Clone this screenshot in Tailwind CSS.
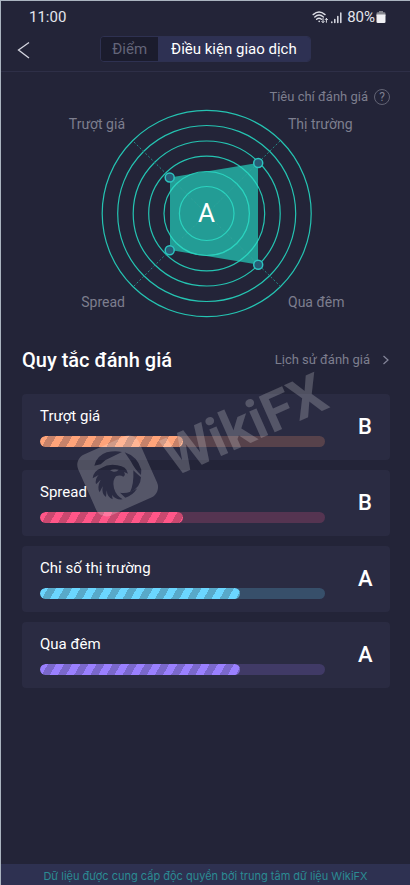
<!DOCTYPE html>
<html lang="vi">
<head>
    <meta charset="UTF-8">
    <meta name="viewport" content="width=device-width, initial-scale=1.0">
    <title>Điều kiện giao dịch</title>
    <script src="https://cdn.jsdelivr.net/npm/@tailwindcss/browser@4"></script>
</head>
<body class="bg-[#232438] font-[Roboto,sans-serif] text-white">
    <div class="relative min-h-screen flex flex-col border-t border-l border-[#aab4c0] overflow-hidden">

        <!-- Status bar -->
        <div class="h-8 flex items-center justify-between pl-7 pr-6 text-[15px] text-[#e4e5ec]">
            <span>11:00</span>
            <div class="flex items-center gap-1">
                <svg class="w-[31px] h-4" viewBox="0 0 31 16" fill="none" stroke="#dcdde5" stroke-width="1.4" stroke-linecap="round">
                    <path d="M1.2 5.6Q7 .6 13 5.6M2.8 8Q7 4.2 11.4 8M4.6 10.3Q7 8.2 9.4 10.3"/>
                    <circle cx="7.2" cy="12.4" r="0.8" fill="#dcdde5" stroke="none"/>
                    <path d="M11 9.5v4M9.8 12.4l1.2 1.2 1.2-1.2M14.4 13.3V9.5M13.2 10.6l1.2-1.2 1.2 1.2" stroke-width="1"/>
                    <path d="M19.8 13v.5M22.8 10.5v3M25.8 7.5v6M28.8 4v9.5" stroke-width="1.5"/>
                </svg>
                <div class="flex items-center gap-px">
                    <span>80%</span>
                    <svg class="w-[10px] h-[14px]" viewBox="0 0 10 14">
                        <path d="M3 1h4v1.2h1.2Q9.5 2.2 9.5 3.6V6H.5V3.6Q.5 2.2 1.8 2.2H3z" fill="#85868f"/>
                        <path d="M.5 4.5h9v7.2Q9.5 13 8.2 13H1.8Q.5 13 .5 11.7z" fill="#f0f0f4"/>
                    </svg>
                </div>
            </div>
        </div>

        <!-- Tabs -->
        <header class="relative h-[39px] flex justify-center border-b border-[#2e2f47] pt-[3px] pb-[9px]">
            <button type="button" aria-label="Quay lại" class="absolute left-3 top-1 p-1">
                <svg class="w-4 h-[18px]" viewBox="0 0 16 18" fill="none" stroke="#d5d6e0" stroke-width="1.3"><path d="M12 1.5 1.500 9l10.500 8"/></svg>
            </button>
            <div class="flex h-[26px] rounded border border-[#2e3151] overflow-hidden text-[15px] leading-6">
                <button type="button" class="px-[11px] bg-[#1b1c2d] text-[#636579]">Điểm</button>
                <button type="button" class="px-[13px] bg-[#2e3153]">Điều kiện giao dịch</button>
            </div>
        </header>

        <div class="flex items-center justify-end gap-[6px] h-[34px] pt-4 pr-5 text-[13px] text-[#7d7e8e]">
            <span>Tiêu chí đánh giá</span>
            <button type="button" aria-label="Trợ giúp" class="size-4 rounded-full border border-[#626374] text-[12px] leading-[14px]">?</button>
        </div>

        <!-- Radar chart -->
        <svg class="w-full h-[220px]" viewBox="1 106 409 220" fill="none">
            <g stroke="#25c4b2" stroke-width="1.2">
                <ellipse cx="206.7" cy="213.5" rx="104.5" ry="103.2"/>
                <ellipse cx="206.7" cy="213.5" rx="89" ry="88"/>
                <ellipse cx="206.7" cy="213.5" rx="73.5" ry="72.5"/>
                <ellipse cx="206.7" cy="213.5" rx="58" ry="57.3"/>
                <ellipse cx="206.7" cy="213.5" rx="42.7" ry="42"/>
            </g>
            <path d="M134 142 280 286M280 141 134 286" stroke="#238b87" stroke-dasharray="2 2"/>
            <path d="M170 177.5 258 163V264.5L170 250Z" fill="#24a69c" fill-opacity="0.93"/>
            <g stroke="#2bd3bf" stroke-width="1.2">
                <ellipse cx="206.7" cy="213.5" rx="27.3" ry="27"/>
                <clipPath id="area"><path d="M170 177.5 258 163V264.5L170 250Z"/></clipPath>
                <g clip-path="url(#area)">
                    <ellipse cx="206.7" cy="213.5" rx="42.7" ry="42"/>
                    <ellipse cx="206.7" cy="213.5" rx="58" ry="57.3"/>
                </g>
            </g>
            <path d="M170 177.5 258 264.5M258 163 170 250" stroke="#3a9f98" stroke-dasharray="2 3" stroke-opacity="0.6"/>
            <g fill="#285c75" stroke="#2cc5c0" stroke-width="1.5">
                <circle cx="169.7" cy="177.5" r="4.5"/>
                <circle cx="258.2" cy="163" r="4.5"/>
                <circle cx="258.2" cy="264.7" r="4.5"/>
                <circle cx="169.7" cy="250.3" r="4.5"/>
            </g>
            <text x="206.5" y="222" text-anchor="middle" class="fill-white text-[26px]">A</text>
            <g class="fill-[#7d7e8e] text-[14px]">
                <text x="125" y="129" text-anchor="end">Trượt giá</text>
                <text x="288" y="129">Thị trường</text>
                <text x="125" y="307" text-anchor="end">Spread</text>
                <text x="288" y="307">Qua đêm</text>
            </g>
        </svg>

        <!-- Rating rules -->
        <main class="flex-1 px-[21px] pr-5">
            <div class="flex items-center justify-between h-[68px]">
                <h1 class="text-[20px] font-medium">Quy tắc đánh giá</h1>
                <a href="#" class="flex items-center gap-3 text-[13px] text-[#7d7e8e]">
                    Lịch sử đánh giá
                    <svg class="w-2 h-[10px]" viewBox="0 0 8 10" fill="none" stroke="#85869a" stroke-width="1.2"><path d="m1.5 1 4.500 4-4.500 4"/></svg>
                </a>
            </div>
            <ul class="flex flex-col gap-[10px] text-[15px] leading-5">
                <li class="flex items-center h-[66px] rounded bg-[#2a2b42] pl-[18px]">
                    <div class="flex-1 flex flex-col gap-[10px] pb-[2px]">
                        <span>Trượt giá</span>
                        <div class="h-[11px] rounded-full bg-[#57424b] overflow-hidden">
                            <div class="w-1/2 h-full rounded-full bg-[repeating-linear-gradient(120deg,#ffa47a_0_7px,#c6826a_7px_14px)]"></div>
                        </div>
                    </div>
                    <span class="w-[65px] pl-[33px] text-[22px] font-medium">B</span>
                </li>
                <li class="flex items-center h-[66px] rounded bg-[#2a2b42] pl-[18px]">
                    <div class="flex-1 flex flex-col gap-[10px] pb-[2px]">
                        <span>Spread</span>
                        <div class="h-[11px] rounded-full bg-[#553451] overflow-hidden">
                            <div class="w-1/2 h-full rounded-full bg-[repeating-linear-gradient(120deg,#ff5688_0_7px,#c9486f_7px_14px)]"></div>
                        </div>
                    </div>
                    <span class="w-[65px] pl-[33px] text-[22px] font-medium">B</span>
                </li>
                <li class="flex items-center h-[66px] rounded bg-[#2a2b42] pl-[18px]">
                    <div class="flex-1 flex flex-col gap-[10px] pb-[2px]">
                        <span>Chỉ số thị trường</span>
                        <div class="h-[11px] rounded-full bg-[#374f6a] overflow-hidden">
                            <div class="w-[70%] h-full rounded-full bg-[repeating-linear-gradient(120deg,#6bd6ff_0_7px,#58a9c9_7px_14px)]"></div>
                        </div>
                    </div>
                    <span class="w-[65px] pl-[33px] text-[22px] font-medium">A</span>
                </li>
                <li class="flex items-center h-[66px] rounded bg-[#2a2b42] pl-[18px]">
                    <div class="flex-1 flex flex-col gap-[10px] pb-[2px]">
                        <span>Qua đêm</span>
                        <div class="h-[11px] rounded-full bg-[#403a66] overflow-hidden">
                            <div class="w-[70%] h-full rounded-full bg-[repeating-linear-gradient(120deg,#9a80ff_0_7px,#7a68cb_7px_14px)]"></div>
                        </div>
                    </div>
                    <span class="w-[65px] pl-[33px] text-[22px] font-medium">A</span>
                </li>
            </ul>
        </main>

        <footer class="h-[21px] bg-[#2e3151] text-center text-[11px] leading-6 text-[#2b8b93] font-[Inter,sans-serif]">Dữ liệu được cung cấp độc quyền bởi trung tâm dữ liệu WikiFX</footer>

        <!-- Watermark -->
        <svg class="absolute left-[69px] top-[359px] w-[270px] h-[170px] pointer-events-none opacity-20" viewBox="70 360 270 170" fill="#fff">
            <mask id="eagle" maskUnits="userSpaceOnUse" x="0" y="-50" width="350" height="350">
                <rect y="-50" width="350" height="350" fill="#fff"/>
                <g fill="#000">
                    <path d="M103 110Q110 80 140 70Q165 64 186 69L160 82Q138 90 122 106Z"/>
                    <path d="M194 70Q232 82 244 122L243 138Q225 122 212 96Z"/>
                    <path d="M243 145Q242 176 210 190Q222 166 220 124Q234 138 243 145Z"/>
                    <path d="M180 191Q205 196 232 178Q218 200 196 206Z"/>
                    <path d="M98 148Q100 126 124 117Q145 104 172 109Q200 112 204 134L192 129Q198 138 190 143Q180 136 168 142Q156 154 162 178Q168 200 188 211Q168 214 156 198L158 211Q142 206 140 184L138 204Q124 196 128 172L119 190Q110 176 122 152L108 166Q104 150 116 138Z"/>
                </g>
                <path d="M150 124Q162 118 176 122Q170 130 160 128Z" fill="#fff"/>
            </mask>
            <g transform="translate(60 429) scale(.3333)">
                <g mask="url(#eagle)">
                    <rect x="73" y="41" width="200" height="200" rx="34" transform="rotate(-24 173 141)"/>
                </g>
            </g>
            <text transform="translate(174 477) rotate(-24)" class="text-[55px] font-bold">WikiFX</text>
        </svg>
    </div>
</body>
</html>
